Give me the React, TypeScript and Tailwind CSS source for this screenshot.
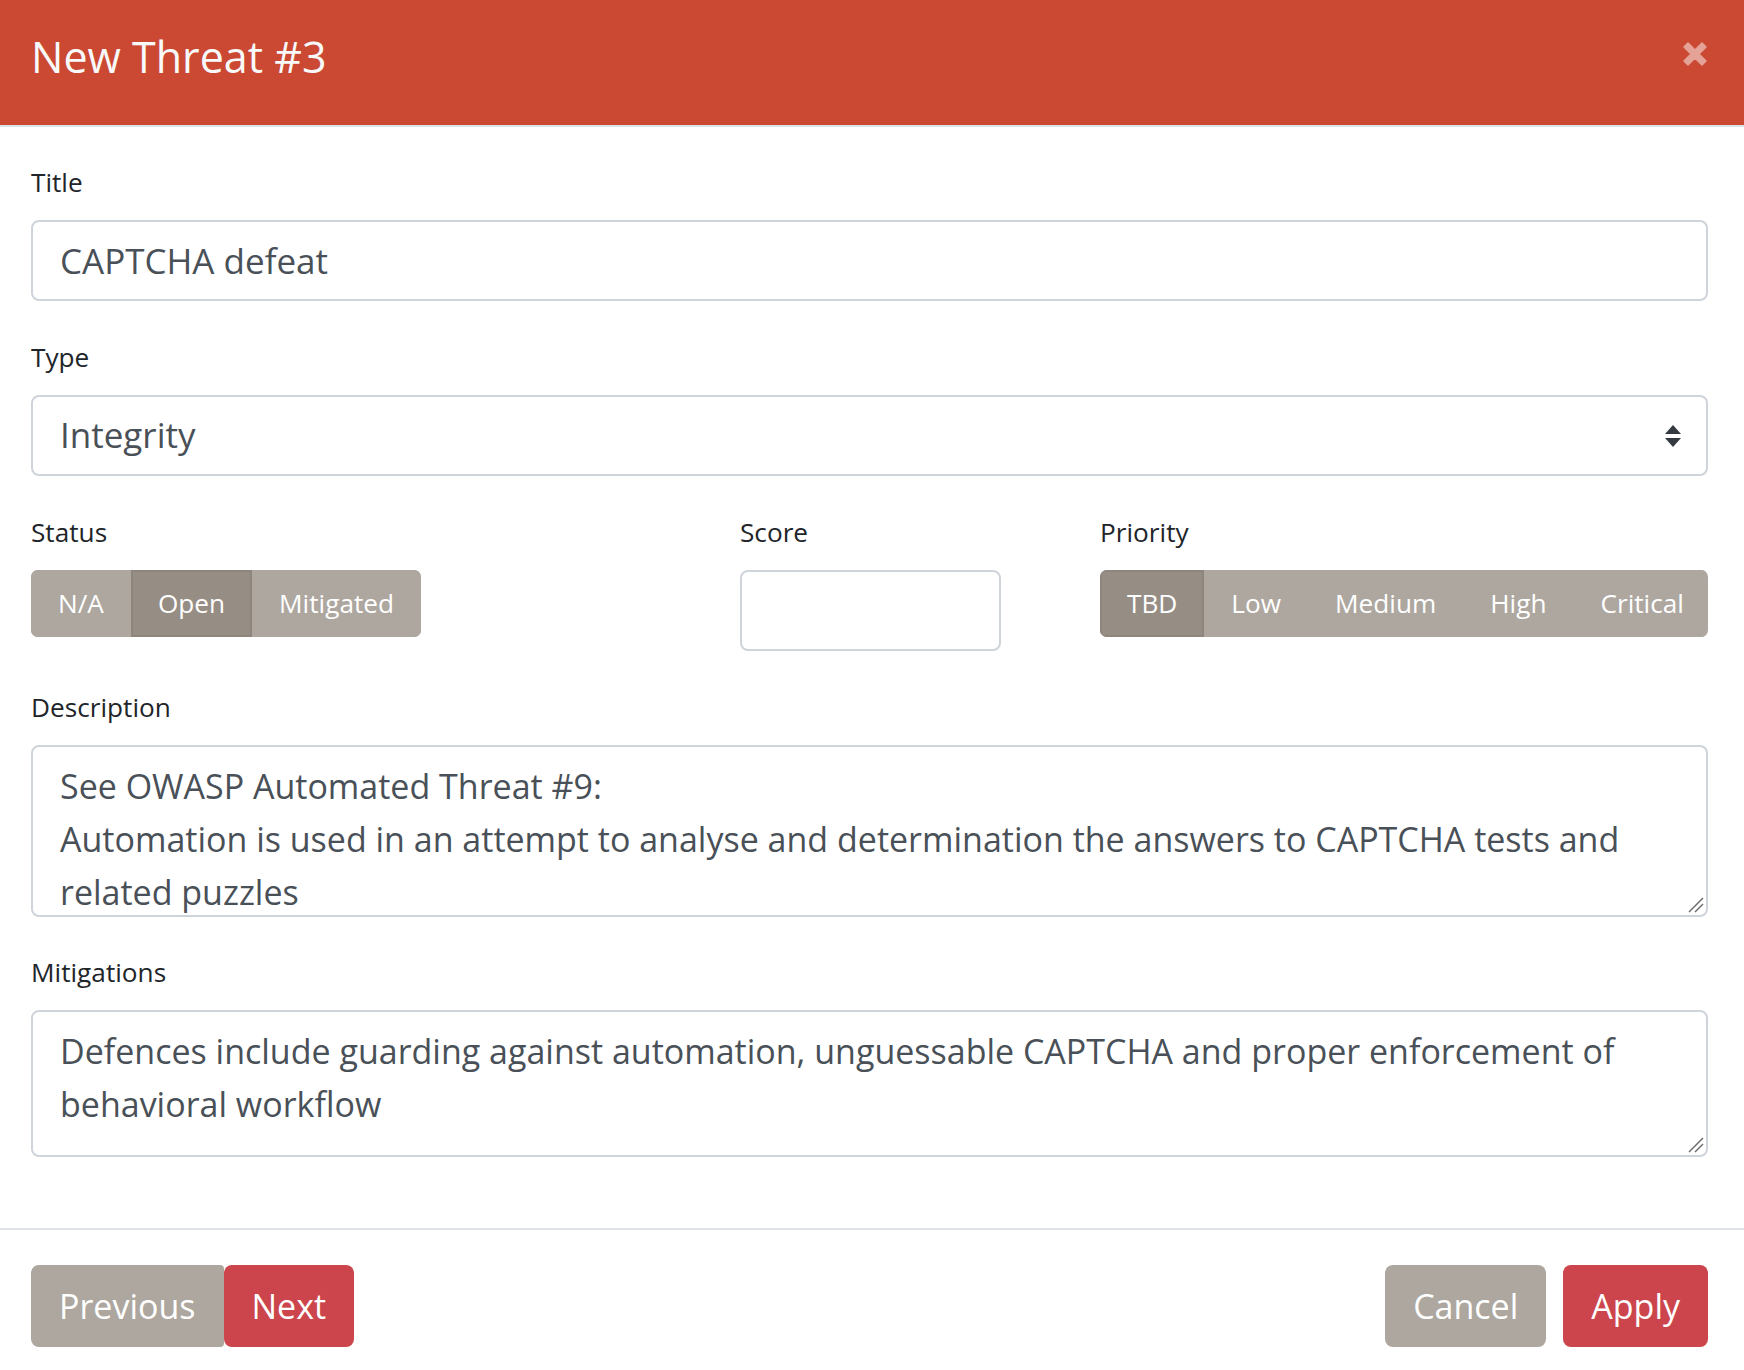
const description =
  "See OWASP Automated Threat #9:\nAutomation is used in an attempt to analyse and determination the answers to CAPTCHA tests and related puzzles";
const mitigations =
  "Defences include guarding against automation, unguessable CAPTCHA and proper enforcement of behavioral workflow";

const statusOptions = ["N/A", "Open", "Mitigated"];
const priorityOptions = ["TBD", "Low", "Medium", "High", "Critical"];

const Label = ({ children }: { children: React.ReactNode }) => (
  <label className="block text-[26.2px] leading-[43px] text-[#212529] pt-[2px] mb-[16px]">{children}</label>
);

const ResizeGrip = () => (
  <svg width="18" height="18" viewBox="0 0 18 18" className="absolute right-[3px] bottom-[3px] pointer-events-none">
    <path d="M2 16 L16 2" stroke="#6b6b6b" strokeWidth="1.4" />
    <path d="M8 16 L16 8" stroke="#6b6b6b" strokeWidth="1.4" />
  </svg>
);

const App = () => {
  return (
    <div className="min-h-screen bg-white font-['Open_Sans','Noto_Sans',sans-serif]">
      {/* header */}
      <div className="h-[127px] bg-[#cb4932] border-b-2 border-[#dee2e6] flex items-start justify-between pl-[31px] pr-[36px] pt-[24px]">
        <h4 className="text-[43px] leading-[65px] text-[#f8f9fa]">New Threat #3</h4>
        <svg width="26" height="26" viewBox="0 0 26 26" className="mt-[17px]">
          <path
            d="M2 6 L6 2 L13 9 L20 2 L24 6 L17 13 L24 20 L20 24 L13 17 L6 24 L2 20 L9 13 Z"
            fill="#e5a398"
            stroke="#e5a398"
            strokeWidth="1.5"
            strokeLinejoin="round"
          />
        </svg>
      </div>

      {/* body */}
      <div className="pl-[31px] pr-[36px] pt-[32px] pb-[71px]">
        <Label>Title</Label>
        <input
          defaultValue="CAPTCHA defeat"
          className="w-full h-[81px] px-[27px] text-[35px] text-[#495057] border-2 border-[#ced4da] rounded-[8px] outline-none"
        />

        <div className="mt-[33px]">
          <Label>Type</Label>
          <div className="w-full h-[81px] pl-[27px] pr-[24px] text-[35px] text-[#495057] border-2 border-[#ced4da] rounded-[8px] flex items-center justify-between">
            <span>Integrity</span>
            <svg width="18" height="24" viewBox="0 0 18 24">
              <path d="M9 1 L17 10 L1 10 Z" fill="#343a40" />
              <path d="M1 14 L17 14 L9 23 Z" fill="#343a40" />
            </svg>
          </div>
        </div>

        <div className="mt-[33px] flex">
          <div className="w-[709px] shrink-0">
            <Label>Status</Label>
            <div className="inline-flex rounded-[7px] overflow-hidden h-[67px]">
              {statusOptions.map((o) => (
                <button
                  key={o}
                  className={
                    o === "Open"
                      ? "px-[25px] text-[26.2px] text-white bg-[#968e85] border-2 border-[#8e867d]"
                      : "px-[25px] text-[26.2px] text-white bg-[#ada7a0] border-2 border-[#ada7a0]"
                  }
                >
                  {o}
                </button>
              ))}
            </div>
          </div>
          <div className="w-[360px] shrink-0">
            <Label>Score</Label>
            <input className="w-[261px] h-[81px] px-[27px] text-[35px] text-[#495057] border-2 border-[#ced4da] rounded-[8px] outline-none" />
          </div>
          <div className="flex-1 min-w-0">
            <Label>Priority</Label>
            <div className="flex rounded-[7px] overflow-hidden h-[67px]">
              {priorityOptions.map((o) => (
                <button
                  key={o}
                  className={
                    o === "TBD"
                      ? "flex-auto px-[25px] text-[26.2px] text-white bg-[#968e85] border-2 border-[#8e867d]"
                      : "flex-auto px-[25px] text-[26.2px] text-white bg-[#ada7a0] border-2 border-[#ada7a0]"
                  }
                >
                  {o}
                </button>
              ))}
            </div>
          </div>
        </div>

        <div className="mt-[33px]">
          <Label>Description</Label>
          <div className="relative">
            <textarea
              defaultValue={description}
              className="block w-full h-[172px] px-[27px] pt-[13px] pb-[11px] text-[34px] leading-[53px] text-[#495057] border-2 border-[#ced4da] rounded-[8px] outline-none overflow-hidden resize-none"
            />
            <ResizeGrip />
          </div>
        </div>

        <div className="mt-[32px]">
          <Label>Mitigations</Label>
          <div className="relative">
            <textarea
              defaultValue={mitigations}
              className="block w-full h-[147px] px-[27px] pt-[13px] pb-[11px] text-[34px] leading-[53px] text-[#495057] border-2 border-[#ced4da] rounded-[8px] outline-none overflow-hidden resize-none"
            />
            <ResizeGrip />
          </div>
        </div>
      </div>

      {/* footer */}
      <div className="border-t-2 border-[#dee2e6] pl-[31px] pr-[36px] pt-[35px] pb-[22px] flex justify-between">
        <div className="flex">
          <button className="h-[82px] px-[28px] text-[34px] text-white bg-[#ada7a0] rounded-l-[8px] rounded-r-[4px]">Previous</button>
          <button className="h-[82px] px-[28px] text-[34px] text-white bg-[#cc454c] rounded-[8px]">Next</button>
        </div>
        <div className="flex gap-[17px]">
          <button className="h-[82px] px-[28px] text-[34px] text-white bg-[#ada7a0] rounded-[8px]">Cancel</button>
          <button className="h-[82px] px-[28px] text-[34px] text-white bg-[#cc454c] rounded-[8px]">Apply</button>
        </div>
      </div>
    </div>
  );
};

export default App;
